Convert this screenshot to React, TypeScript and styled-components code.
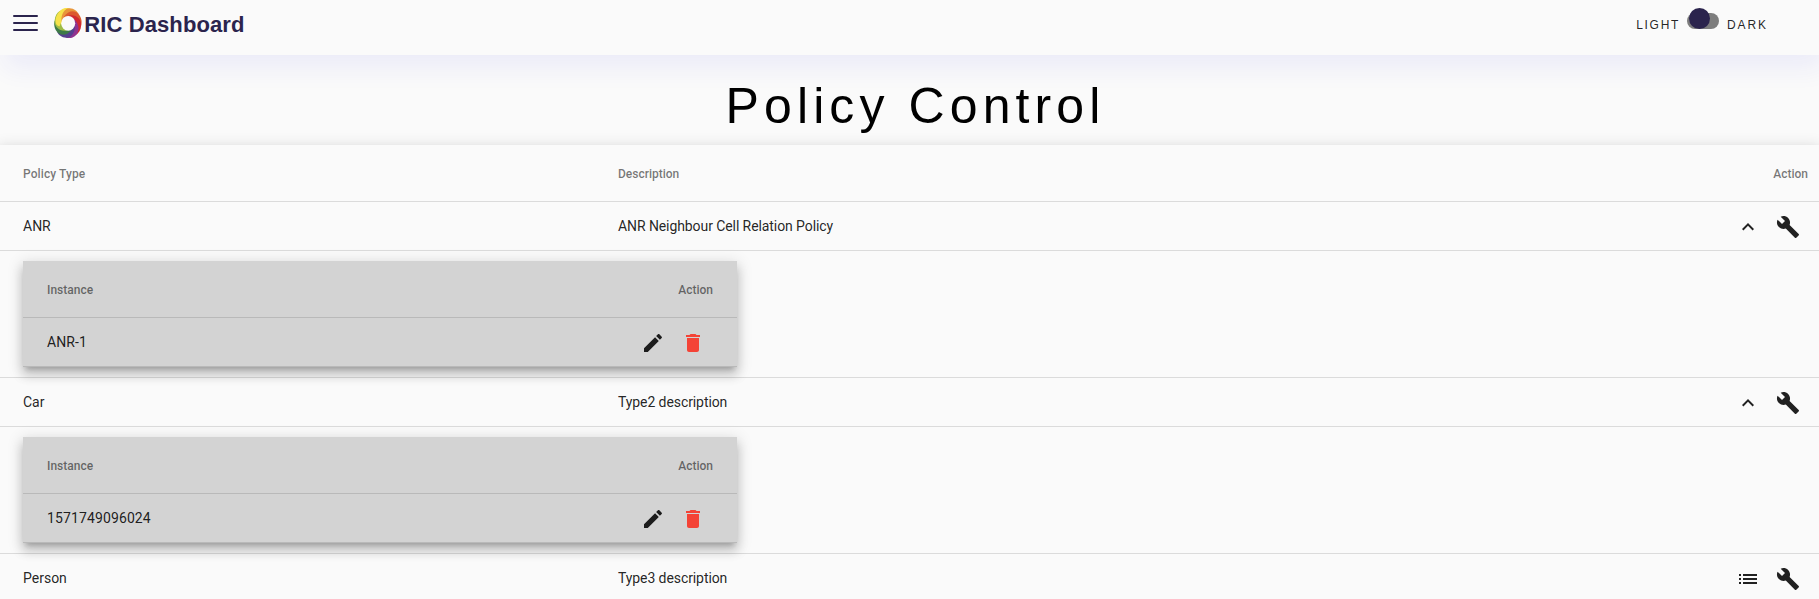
import React from "react";
import styled, { createGlobalStyle } from "styled-components";

const GlobalStyle = createGlobalStyle`
  *, *::before, *::after { box-sizing: border-box; }
  html, body { margin: 0; height: 599px; overflow: hidden; }
  body { background: #fafafa; color: rgba(0, 0, 0, 0.87); font-family: Roboto, sans-serif; }
`;

const navy = "#2b244d";

const Header = styled.header`
  position: relative;
  display: flex;
  align-items: flex-start;
  height: 55px;
  padding: 8px 51px 0 13px;
  background: #fafafa;
  box-shadow: 5px 13px 26px 0 rgba(45, 42, 232, 0.07);
`;

const MenuButton = styled.button`
  display: flex;
  flex-direction: column;
  gap: 5px;
  width: 25px;
  margin: 7px 16px 0 0;
  padding: 0;
  border: 0;
  background: none;
`;

const MenuLine = styled.span`
  height: 2px;
  border-radius: 1px;
  background: ${navy};
`;

const LogoMark = styled.svg`
  width: 28px;
  height: 30px;
`;

const Brand = styled.div`
  margin: 4px auto 0 2.3px;
  color: ${navy};
  font: bold 22px/26px "Liberation Sans", Arial, sans-serif;
  letter-spacing: 0.1px;
`;

const ThemeSwitch = styled.div`
  display: flex;
  align-items: flex-start;
`;

const SwitchLabel = styled.span<{ $spacing: number }>`
  margin-top: 9px;
  font: 12px/16px "Liberation Sans", Arial, sans-serif;
  letter-spacing: ${(p) => p.$spacing}px;
`;

const Track = styled.div`
  display: flex;
  align-items: flex-end;
  width: 32px;
  height: 16px;
  margin: 5px 8px 0 7px;
  padding-left: 1.7px;
  border-radius: 8px;
  background: #7d7d7d;
`;

const Thumb = styled.div`
  width: 21.3px;
  height: 21.3px;
  flex: none;
  border-radius: 50%;
  background: ${navy};
`;

const Title = styled.h1`
  height: 90px;
  margin: 0;
  padding: 21px 0 0 12px;
  text-align: center;
  color: #000;
  font: 400 50px/60px "Liberation Sans", Arial, sans-serif;
  letter-spacing: 5.1px;
`;

const Table = styled.section`
  height: 460px;
  background: #fafafa;
  box-shadow: 0 5px 5px -3px rgba(0, 0, 0, 0.2), 0 8px 10px 1px rgba(0, 0, 0, 0.14),
    0 3px 14px 2px rgba(0, 0, 0, 0.12);
`;

const Row = styled.div<{ $head?: boolean }>`
  display: grid;
  grid-template-columns: 595px 1fr auto;
  align-items: center;
  height: ${(p) => (p.$head ? 57 : 49)}px;
  padding: ${(p) => (p.$head ? 2 : 0)}px 11px 0 23px;
  border-bottom: 1px solid rgba(0, 0, 0, 0.12);
  color: ${(p) => (p.$head ? "rgba(0, 0, 0, 0.54)" : "rgba(0, 0, 0, 0.87)")};
  font-size: ${(p) => (p.$head ? 12 : 14)}px;
  font-weight: ${(p) => (p.$head ? 500 : 400)};
`;

const Cell = styled.span<{ $spacing?: number }>`
  letter-spacing: ${(p) => p.$spacing ?? 0}px;
`;

const Detail = styled.div`
  padding: 10px 23px;
  border-bottom: 1px solid rgba(0, 0, 0, 0.12);
`;

const Card = styled.div`
  width: 714px;
  background: #d3d3d3;
  box-shadow: 0 5px 5px -3px rgba(0, 0, 0, 0.2), 0 8px 10px 1px rgba(0, 0, 0, 0.14),
    0 3px 14px 2px rgba(0, 0, 0, 0.12);
`;

const CardRow = styled(Row)`
  grid-template-columns: 1fr auto;
  padding-left: 24px;
  padding-right: 24px;
`;

const Actions = styled.div`
  display: flex;
  gap: 16px;
  padding: 2px 8px 0;
`;

const Glyph = styled.svg<{ $warn?: boolean }>`
  display: block;
  width: 24px;
  height: 24px;
  fill: ${(p) => (p.$warn ? "#f44336" : "rgba(0, 0, 0, 0.87)")};
`;

const paths = {
  less: "M12 8l-6 6 1.41 1.41L12 10.83l4.59 4.58L18 14z",
  list: "M3 13h2v-2H3v2zm0 4h2v-2H3v2zm0-8h2V7H3v2zm4 4h14v-2H7v2zm0 4h14v-2H7v2zM7 7v2h14V7H7z",
  build:
    "M22.7 19l-9.1-9.1c.9-2.3.4-5-1.5-6.9-2-2-5-2.4-7.4-1.3L9 6 6 9 1.6 4.7C.4 7.1.9 10.1 2.9 12.1c1.9 1.9 4.6 2.4 6.9 1.5l9.1 9.1c.4.4 1 .4 1.4 0l2.3-2.3c.5-.4.5-1.1.1-1.4z",
  edit: "M3 17.25V21h3.75L17.81 9.94l-3.75-3.75L3 17.25zM20.71 7.04c.39-.39.39-1.02 0-1.41l-2.34-2.34c-.39-.39-1.02-.39-1.41 0l-1.83 1.83 3.75 3.75 1.83-1.83z",
  remove: "M6 19c0 1.1.9 2 2 2h8c1.1 0 2-.9 2-2V7H6v12zM19 4h-3.5l-1-1h-5l-1 1H5v2h14V4z",
};

const Icon = ({ name, warn }: { name: keyof typeof paths; warn?: boolean }) => (
  <Glyph viewBox="0 0 24 24" $warn={warn}>
    <path d={paths[name]} />
  </Glyph>
);

const policies = [
  { type: "ANR", description: "ANR Neighbour Cell Relation Policy", instance: "ANR-1" },
  { type: "Car", description: "Type2 description", instance: "1571749096024" },
  { type: "Person", description: "Type3 description" },
];

const petals = ["#f6e24a", "#e8963a", "#dc5a2e", "#d02a30", "#8e3390", "#54408f", "#3d7a48", "#9dbb45"];

const Logo = () => (
  <LogoMark viewBox="0 0 28 30">
    {petals.map((color, i) => (
      <path
        key={color}
        fill={color}
        transform={`translate(13.9 15) scale(.9 1) rotate(${i * 45 - 45})`}
        d="M-7.5 -1C-9 -9-4-15 2-14.8C7-14.5 10.5-12 12.2-8.5C8-11 2-10-1.5-7.3Z"
      />
    ))}
    <path fill={petals[0]} d="M1.5 13C1.8 6 6 1 13 .2C9 3 7 8 7.5 13L5.5 18.5C3 18 1.5 16 1.5 13Z" />
    <ellipse cx="14.2" cy="15.3" rx="7" ry="7.4" fill="#fafafa" />
  </LogoMark>
);

export default function App() {
  return (
    <>
      <GlobalStyle />
      <Header>
        <MenuButton aria-label="Menu">
          <MenuLine />
          <MenuLine />
          <MenuLine />
        </MenuButton>
        <Logo />
        <Brand>RIC Dashboard</Brand>
        <ThemeSwitch>
          <SwitchLabel $spacing={1.7}>LIGHT</SwitchLabel>
          <Track>
            <Thumb />
          </Track>
          <SwitchLabel $spacing={1.9}>DARK</SwitchLabel>
        </ThemeSwitch>
      </Header>
      <Title>Policy Control</Title>
      <Table>
        <Row $head>
          <Cell $spacing={0.1}>Policy Type</Cell>
          <Cell>Description</Cell>
          <Cell>Action</Cell>
        </Row>
        {policies.map((p) => (
          <React.Fragment key={p.type}>
            <Row>
              <Cell>{p.type}</Cell>
              <Cell $spacing={-0.085}>{p.description}</Cell>
              <Actions>
                <Icon name={p.instance ? "less" : "list"} />
                <Icon name="build" />
              </Actions>
            </Row>
            {p.instance && (
              <Detail>
                <Card>
                  <CardRow $head>
                    <Cell>Instance</Cell>
                    <Cell>Action</Cell>
                  </CardRow>
                  <CardRow>
                    <Cell $spacing={0.12}>{p.instance}</Cell>
                    <Actions>
                      <Icon name="edit" />
                      <Icon name="remove" warn />
                    </Actions>
                  </CardRow>
                </Card>
              </Detail>
            )}
          </React.Fragment>
        ))}
      </Table>
    </>
  );
}
